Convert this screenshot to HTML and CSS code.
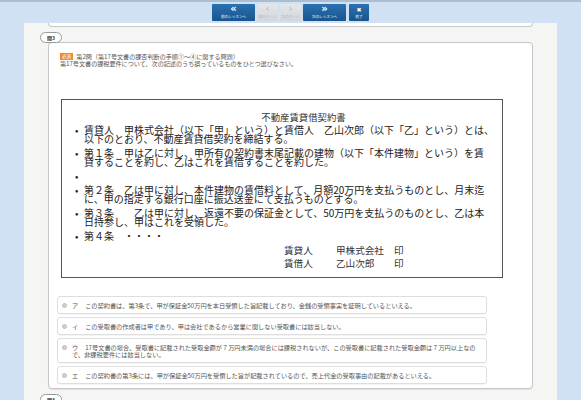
FILE: index.html
```html
<!DOCTYPE html>
<html lang="ja">
<head>
    <meta charset="UTF-8">
    <title>問3</title>
    <link rel="stylesheet" href="styles.css">
</head>
<body>
    <div class="topbar">
        <div class="nav-btn"><span class="ico">&laquo;</span><span class="lbl">前のレッスンへ</span></div>
        <div class="nav-btn off"><span class="ico">&lsaquo;</span><span class="lbl">前のページ</span></div>
        <div class="nav-btn off"><span class="ico">&rsaquo;</span><span class="lbl">次のページ</span></div>
        <div class="nav-btn"><span class="ico">&raquo;</span><span class="lbl">次のレッスンへ</span></div>
        <div class="nav-btn close"><span class="ico">&#10006;</span><span class="lbl">終了</span></div>
    </div>

    <div class="panel">
        <div class="prev-card"></div>

        <div class="question">
            <div class="q-tag">問3</div>
            <div class="card">
                <div class="q-head">
                    <div><span class="badge">必須</span> 第2問（第17号文書の課否判断の手順①～④に関する問題）</div>
                    <div>第17号文書の課税要件について、次の記述のうち誤っているものをひとつ選びなさい。</div>
                </div>

                <div class="doc">
                    <div class="doc-title">不動産賃貸借契約書</div>
                    <ul class="doc-list">
                        <li><span class="dot">•</span><span>賃貸人　甲株式会社（以下「甲」という）と賃借人　乙山次郎（以下「乙」という）とは、<br>以下のとおり、不動産賃貸借契約を締結する。</span></li>
                        <li><span class="dot">•</span><span>第１条　甲は乙に対し、甲所有の契約書末尾記載の建物（以下「本件建物」という）を賃<br>貸することを約し、乙はこれを賃借することを約した。</span></li>
                        <li><span class="dot">•</span><span></span></li>
                        <li><span class="dot">•</span><span>第２条　乙は甲に対し、本件建物の賃借料として、月額20万円を支払うものとし、月末迄<br>に、甲の指定する銀行口座に振込送金にて支払うものとする。</span></li>
                        <li><span class="dot">•</span><span>第３条　　乙は甲に対し、返還不要の保証金として、50万円を支払うのものとし、乙は本<br>日持参し、甲はこれを受領した。</span></li>
                        <li><span class="dot">•</span><span>第４条　・・・・</span></li>
                    </ul>
                    <div class="sign">
                        <span>賃貸人</span><span>甲株式会社</span><span>印</span>
                        <span>賃借人</span><span>乙山次郎</span><span>印</span>
                    </div>
                </div>

                <div class="options">
                    <div class="opt"><span class="radio"></span><span><span class="ltr">ア</span>この契約書は、第3条で、甲が保証金50万円を本日受領した旨記載しており、金銭の受領事実を証明しているといえる。</span></div>
                    <div class="opt"><span class="radio"></span><span><span class="ltr">イ</span>この受取書の作成者は甲であり、甲は会社であるから営業に関しない受取書には該当しない。</span></div>
                    <div class="opt"><span class="radio"></span><span><span class="ltr">ウ</span>17号文書の場合、受取書に記載された受取金額が７万円未満の場合には課税されないが、この受取書に記載された受取金額は７万円以上なの<br>で、非課税要件には該当しない。</span></div>
                    <div class="opt"><span class="radio"></span><span><span class="ltr">エ</span>この契約書の第3条には、甲が保証金50万円を受領した旨が記載されているので、売上代金の受取事由の記載があるといえる。</span></div>
                </div>
            </div>
        </div>

        <div class="question">
            <div class="q-tag">問4</div>
        </div>
    </div>
</body>
</html>
```

FILE: styles.css
```css
body { margin: 0; background: #cfe1f3; font-family: "Noto Sans CJK JP", "Noto Sans", sans-serif; color: #333; height: 400px; overflow: hidden; }

.topbar { display: flex; justify-content: center; gap: 2px; padding-top: 2px; border-top: 2px solid #a9bdd3; box-sizing: border-box; height: 23px; }
.nav-btn {
    width: 43px; height: 17px;
    display: flex; flex-direction: column; align-items: center;
    background: linear-gradient(#2b70b0, #17558f);
    color: #fff;
    border-radius: 1px;
}
.nav-btn .ico { font-size: 10px; line-height: 10px; font-weight: bold; font-family: "DejaVu Sans", sans-serif; }
.nav-btn .lbl { font-size: 3.6px; line-height: 5px; white-space: nowrap; }
.nav-btn.off { width: 21px; background: linear-gradient(#e4e6e8, #d3d7db); color: #aeb3b8; }
.nav-btn.off .ico { font-weight: normal; }
.nav-btn.close { width: 20px; margin-left: 1px; }
.nav-btn.close .ico { font-size: 6px; line-height: 9px; padding-top: 1px; }

.panel { margin: 0 24px; background: #f5f5f3; height: 377px; overflow: hidden; }
.prev-card { height: 3px; margin: 0 24px; background: #fff; border: 1px solid #c8c8c8; border-top: none; border-radius: 0 0 4px 4px; }

.question { margin-top: 5px; }
.q-tag {
    position: relative; z-index: 1;
    margin-left: 16px; margin-bottom: -1px;
    width: 20px; height: 9px; line-height: 9px;
    border: 1px solid #9a9a9a; border-radius: 6px;
    background: #fff; text-align: center;
    font-size: 5px; font-weight: bold; color: #333;
}
.card {
    margin: 0 24px;
    background: #fff;
    border: 1px solid #c6c6c6; border-radius: 4px;
    padding: 10px 0 4px 9px;
    box-shadow: 0 1px 1px rgba(0,0,0,0.08);
}

.q-head { padding-left: 2px; font-size: 6.1px; line-height: 7px; color: #555; }
.badge { display: inline-block; width: 13px; height: 7px; line-height: 7px; background: #f0882e; color: #fff; text-align: center; font-size: 4.5px; margin-right: 2px; vertical-align: top; }

.doc { margin: 32px 0 0 3px; width: 442px; box-sizing: border-box; border: 1px solid #555; padding: 12px 0 7px 13px; color: #222; }
.doc-title { font-size: 9.4px; line-height: 10px; text-align: center; padding-left: 30px; color: #333; }
.doc-list { list-style: none; margin: 3px 0 0; padding: 0; display: flex; flex-direction: column; gap: 5px; }
.doc-list li { display: flex; font-size: 10px; line-height: 9px; white-space: nowrap; min-height: 9px; }
.doc-list .dot { width: 9px; flex: none; }
.sign { display: grid; grid-template-columns: 52px 58px auto; margin: 4px 0 0 209px; font-size: 9.6px; line-height: 13px; color: #333; }

.options { margin: 18px 0 0 -1px; width: 430px; display: flex; flex-direction: column; gap: 3px; }
.opt {
    display: flex; align-items: flex-start;
    border: 1px solid #dedede; border-radius: 3px;
    padding: 5px 4px 4px 4px;
    font-size: 6.2px; line-height: 7px; color: #555;
    box-shadow: 0 1px 1px rgba(0,0,0,0.05);
}
.radio { flex: none; width: 5px; height: 5px; border-radius: 50%; background: #d0d0d0; border: 1px solid #bdbdbd; box-sizing: border-box; margin: 1px 5px 0 0; }
.ltr { margin-right: 7px; }
```
